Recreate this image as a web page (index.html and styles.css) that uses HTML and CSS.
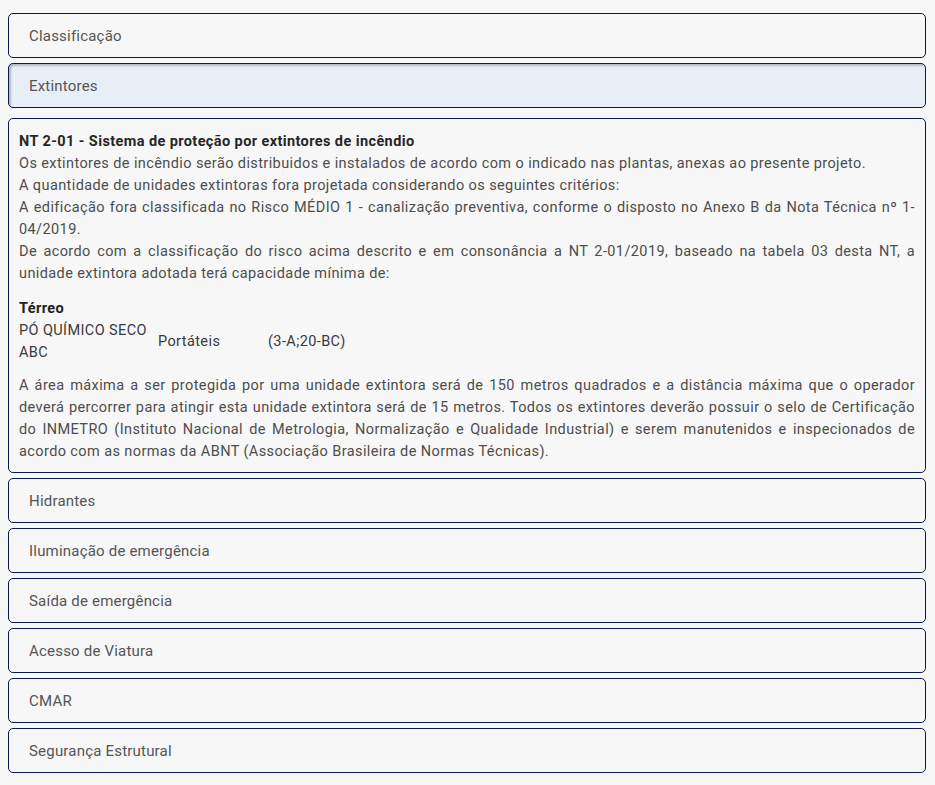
FILE: index.html
```html
<!DOCTYPE html>
<html lang="pt-BR">
<head>
<meta charset="utf-8">
<title>Acordeão</title>
<link rel="stylesheet" href="styles.css">
</head>
<body>
<div class="accordion">
  <div class="acc-header">Classificação</div>
  <div class="acc-header is-open">Extintores</div>
  <div class="acc-panel">
    <div class="panel-title">NT 2-01 - Sistema de proteção por extintores de incêndio</div>
    <p class="txt">Os extintores de incêndio serão distribuidos e instalados de acordo com o indicado nas plantas, anexas ao presente projeto.</p>
    <p class="txt">A quantidade de unidades extintoras fora projetada considerando os seguintes critérios:</p>
    <p class="txt">A edificação fora classificada no Risco MÉDIO 1 - canalização preventiva, conforme o disposto no Anexo B da Nota Técnica nº 1-04/2019.</p>
    <p class="txt">De acordo com a classificação do risco acima descrito e em consonância a NT 2-01/2019, baseado na tabela 03 desta NT, a unidade extintora adotada terá capacidade mínima de:</p>
    <div class="floor">Térreo</div>
    <div class="ext-row">
      <div class="ext-type">PÓ QUÍMICO SECO ABC</div>
      <div class="ext-kind">Portáteis</div>
      <div class="ext-cap">(3-A;20-BC)</div>
    </div>
    <p class="txt">A área máxima a ser protegida por uma unidade extintora será de 150 metros quadrados e a distância máxima que o operador deverá percorrer para atingir esta unidade extintora será de 15 metros. Todos os extintores deverão possuir o selo de Certificação do INMETRO (Instituto Nacional de Metrologia, Normalização e Qualidade Industrial) e serem manutenidos e inspecionados de acordo com as normas da ABNT (Associação Brasileira de Normas Técnicas).</p>
  </div>
  <div class="acc-header">Hidrantes</div>
  <div class="acc-header">Iluminação de emergência</div>
  <div class="acc-header">Saída de emergência</div>
  <div class="acc-header">Acesso de Viatura</div>
  <div class="acc-header">CMAR</div>
  <div class="acc-header">Segurança Estrutural</div>
</div>
</body>
</html>
```

FILE: styles.css
```css
html, body {
  background: #f7f7f7;
}
body {
  margin: 0 9px 0 8px;
  font-family: Roboto, "Liberation Sans", sans-serif;
}
.accordion {
  display: flex;
  flex-direction: column;
  gap: 5px;
  padding-top: 13px;
  padding-bottom: 12px;
}
.acc-header {
  box-sizing: border-box;
  height: 45px;
  display: flex;
  align-items: center;
  padding: 0 20px;
  border: 1px solid #0c1a4b;
  border-radius: 5px;
  background: #f7f7f7;
  color: #555;
  font-size: 15px;
  letter-spacing: 0.2px;
}
.acc-header.is-open {
  background: #e8eef5;
  box-shadow: inset 2px 2px 2px rgba(0,0,0,0.22);
}
.acc-panel {
  margin-top: 5px;
  border: 1px solid #0c1a4b;
  border-radius: 5px;
  background: #f7f7f7;
  padding: 12px 10px 9px 10px;
  color: #4d4d4d;
  font-size: 14.5px;
  line-height: 22px;
  letter-spacing: 0.4px;
}
.panel-title {
  font-weight: bold;
  color: #262626;
}
.txt {
  margin: 0;
  text-align: justify;
}
.floor {
  margin-top: 13px;
  font-weight: bold;
  color: #222;
}
.ext-row {
  display: grid;
  grid-template-columns: 139px 110px auto;
  align-items: center;
  margin-bottom: 11px;
  color: #3a3a3a;
  letter-spacing: 0.4px;
}
.ext-type {
  padding-right: 8px;
}
```
